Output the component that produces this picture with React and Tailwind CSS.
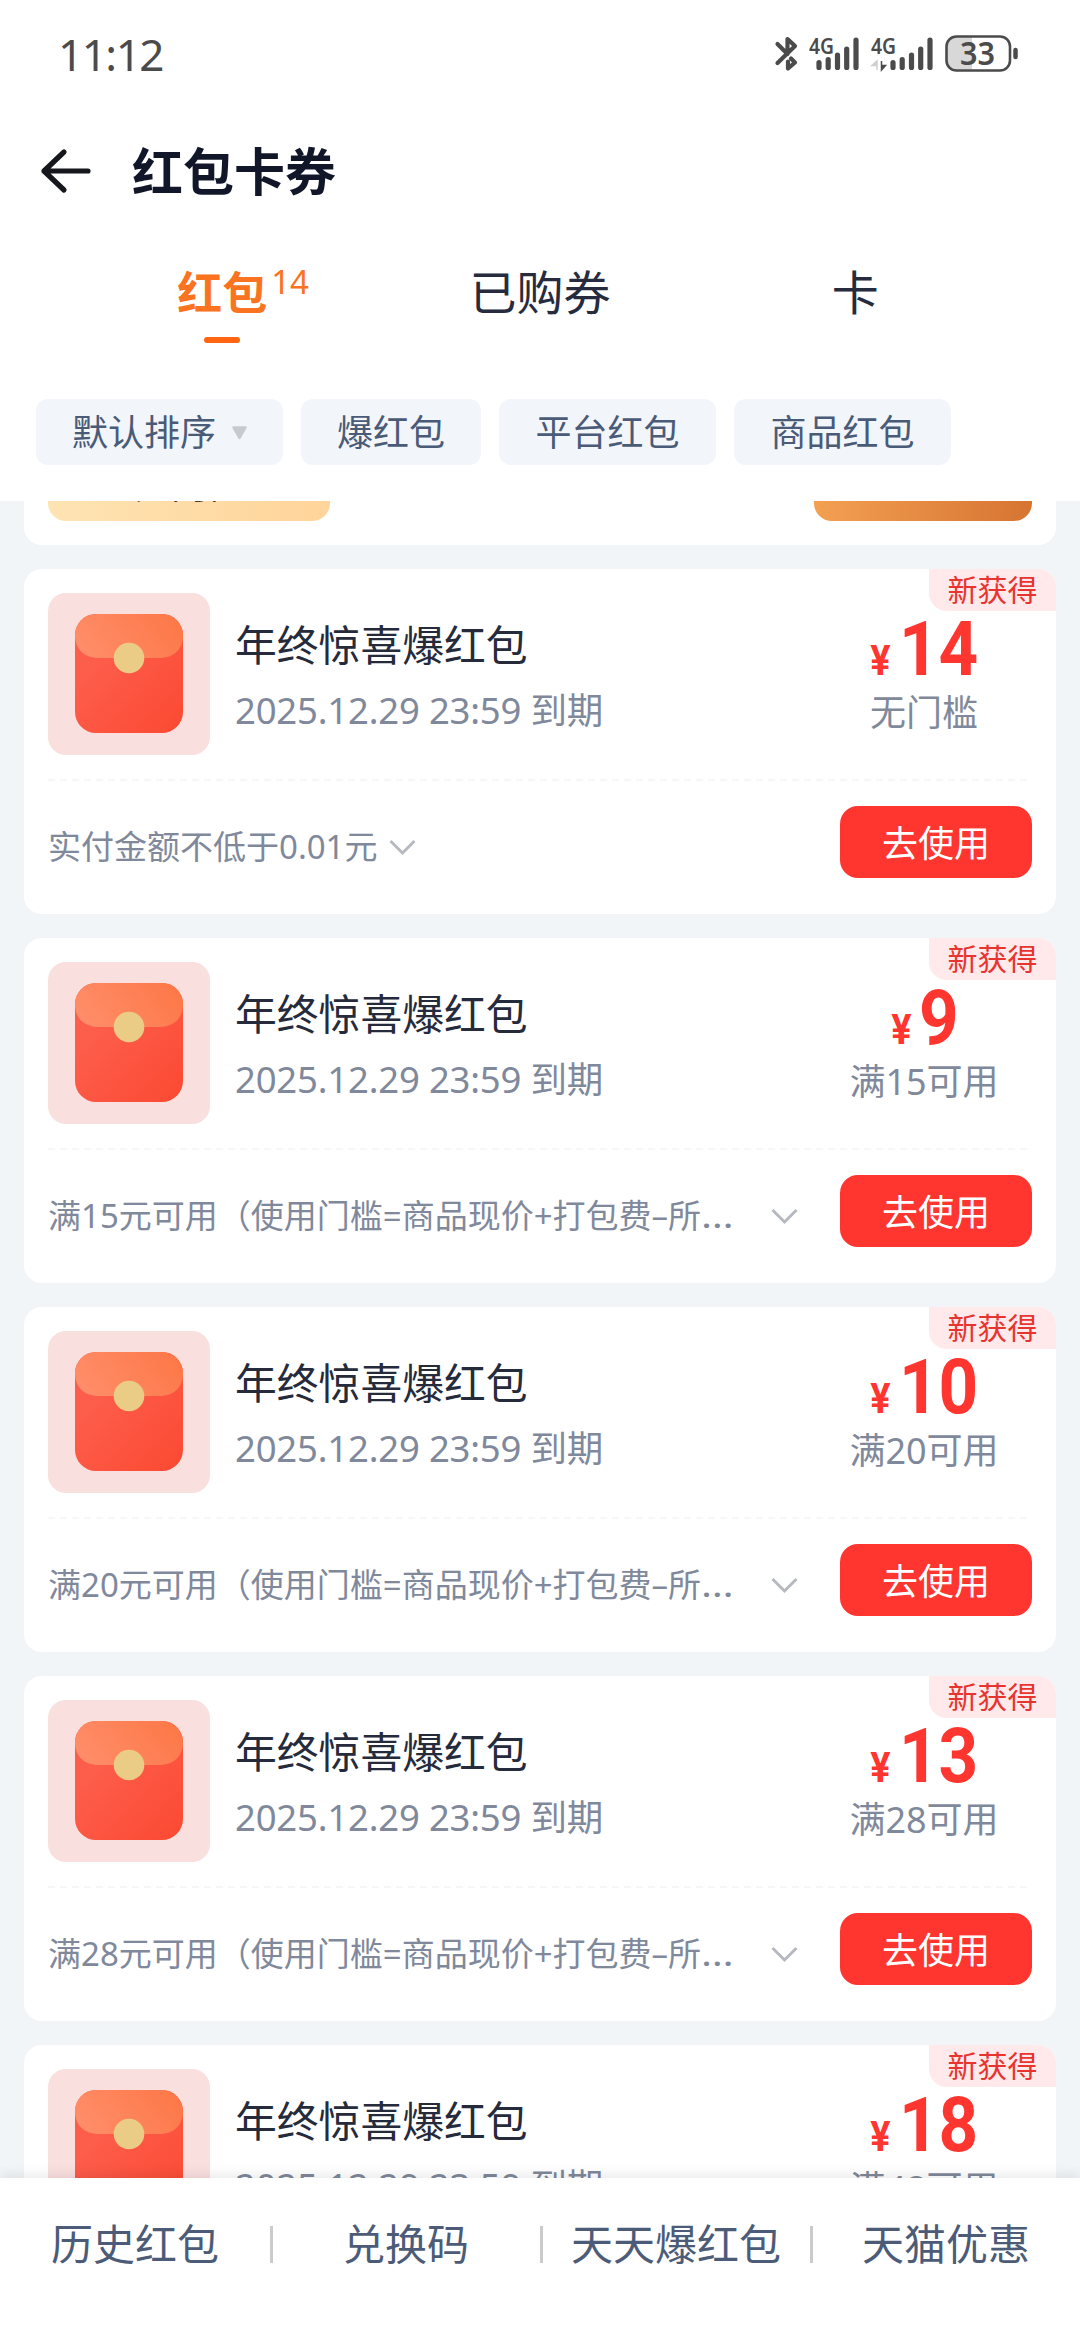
import React from "react";

const coupons = [
  { amount: "14", limit: "无门槛", rule: "实付金额不低于0.01元", short: true },
  { amount: "9", limit: "满15可用", rule: "满15元可用（使用门槛=商品现价+打包费–所" },
  { amount: "10", limit: "满20可用", rule: "满20元可用（使用门槛=商品现价+打包费–所" },
  { amount: "13", limit: "满28可用", rule: "满28元可用（使用门槛=商品现价+打包费–所" },
  { amount: "18", limit: "满48可用", rule: "满48元可用（使用门槛=商品现价+打包费–所" },
];

function SignalBars() {
  return (
    <g stroke="#4b4b4b" strokeWidth="5.200" strokeLinecap="round">
      <path d="M2.500 25.500v5M11.700 22.500v8M21 18v12.500M30.200 12v18.500M39.500 3v27.500" />
    </g>
  );
}

function StatusBar() {
  return (
    <div className="flex h-[108px] shrink-0 items-center justify-between pl-[58px] pr-[56px]">
      <span className="text-[44px] leading-[60px] tracking-[-1.5px] text-[#4b4b4b]">11:12</span>
      <svg width="250" height="64" viewBox="774 22 250 64" fill="none">
        <g stroke="#4b4b4b" strokeWidth="4.200" strokeLinejoin="round" strokeLinecap="round">
          <path d="M777.500 44l10 10V39l7.500 7-17.500 17" />
          <path d="M791 58.500l4 4-7 6v-7" />
        </g>
        <text x="809" y="53.500" fontSize="22" fontWeight="600" textLength="25" lengthAdjust="spacingAndGlyphs" fill="#4b4b4b">4G</text>
        <g transform="translate(816.500 37)"><SignalBars /></g>
        <text x="871" y="53.500" fontSize="22" fontWeight="600" textLength="25" lengthAdjust="spacingAndGlyphs" fill="#4b4b4b">4G</text>
        <path d="M877 70V61l-5 4.500h5" fill="#cfcfcf" stroke="#cfcfcf" strokeWidth="1.500" />
        <path d="M881.500 61v9l4-4.500h-4" fill="#4b4b4b" stroke="#4b4b4b" strokeWidth="1.500" />
        <g transform="translate(890.500 37)"><SignalBars /></g>
        <path d="M972 36v35H957a11 11 0 0 1-11-11V47a11 11 0 0 1 11-11z" fill="#d8d8d8" />
        <rect x="946.500" y="36.500" width="63.500" height="34" rx="10" stroke="#4b4b4b" strokeWidth="2.600" />
        <path d="M1015.500 50v7" stroke="#4b4b4b" strokeWidth="4.500" strokeLinecap="round" />
        <text x="977.500" y="65" textAnchor="middle" fontSize="32" fontWeight="600" textLength="35" lengthAdjust="spacingAndGlyphs" fill="#4b4b4b">33</text>
      </svg>
    </div>
  );
}

function Header() {
  return (
    <header className="flex h-[501px] shrink-0 flex-col bg-white">
      <StatusBar />
      <div className="flex h-[126px] items-center pl-[40px]">
        <svg width="52" height="46" viewBox="0 0 52 46" fill="none" stroke="#15171c" strokeWidth="5.200" strokeLinecap="round" strokeLinejoin="round">
          <path d="M24 4L4 23l20 19M4 23h44" />
        </svg>
        <h1 className="ml-[40px] text-[51px] font-bold leading-[52px] text-[#111729]">红包卡券</h1>
      </div>
      <nav className="mx-[67px] flex h-[118px]">
        <div className="relative flex flex-1 flex-col items-center pt-[36px]">
          <div className="relative mr-[5px] text-[45px] font-bold leading-[46px] text-[#fa7320]">
            红包
            <span className="absolute left-[94px] top-[-4px] text-[33px] font-normal leading-[32px]">14</span>
          </div>
          <div className="mr-[5px] mt-[21px] h-[6px] w-[36px] rounded-full bg-[#ff6510]" />
        </div>
        <div className="flex-1 pt-[34px] text-center text-[47px] leading-[48px] text-[#262b3d]">已购券</div>
        <div className="flex-1 pt-[34px] text-center text-[47px] leading-[48px] text-[#262b3d]">卡</div>
      </nav>
      <div className="mt-[47px] flex gap-[18px] pl-[36px] text-[36px] leading-[36px] text-[#4a5b78]">
        <div className="flex h-[66px] w-[247px] items-center rounded-[12px] bg-[#f2f5f9] pl-[36px] pt-[2px]">
          默认排序
          <svg className="ml-[15px]" width="17" height="14" viewBox="0 0 17 14">
            <path d="M2.500 1.500h12L8.500 12z" fill="#c9cacd" stroke="#c9cacd" strokeWidth="2.500" strokeLinejoin="round" />
          </svg>
        </div>
        <div className="flex h-[66px] w-[180px] items-center justify-center rounded-[12px] bg-[#f2f5f9] pt-[2px]">爆红包</div>
        <div className="flex h-[66px] w-[217px] items-center justify-center rounded-[12px] bg-[#f2f5f9] pt-[2px]">平台红包</div>
        <div className="flex h-[66px] w-[217px] items-center justify-center rounded-[12px] bg-[#f2f5f9] pt-[2px]">商品红包</div>
      </div>
    </header>
  );
}

function Envelope() {
  return (
    <svg className="shrink-0" width="162" height="162" viewBox="0 0 162 162">
      <defs>
        <linearGradient id="envelopeBody" x1="0" y1="0" x2="1" y2="1">
          <stop offset="0.300" stopColor="#fd5d4b" />
          <stop offset="1" stopColor="#fb4932" />
        </linearGradient>
        <linearGradient id="envelopeFlap" x1="0" y1="0.600" x2="1" y2="0.300">
          <stop offset="0" stopColor="#ff8d69" />
          <stop offset="1" stopColor="#fd7848" />
        </linearGradient>
      </defs>
      <rect width="162" height="162" rx="18" fill="#fadfdf" />
      <rect x="27" y="21" width="108" height="119" rx="21" fill="url(#envelopeBody)" />
      <path d="M27 42a21 21 0 0 1 21-21h66a21 21 0 0 1 21 21c0 14-9 23-24 23H51C36 65 27 56 27 42z" fill="url(#envelopeFlap)" />
      <circle cx="81" cy="65" r="15.300" fill="#ebcc86" />
    </svg>
  );
}

function Coupon({ item }) {
  return (
    <article className="relative h-[345px] shrink-0 overflow-hidden rounded-[18px] bg-white px-[24px] pt-[24px]">
      <div className="absolute right-0 top-0 flex h-[42px] w-[127px] items-center justify-center rounded-bl-[18px] bg-[#ffe9ea] text-[30px] leading-[30px] text-[#e8342f]">新获得</div>
      <div className="flex h-[162px]">
        <Envelope />
        <div className="ml-[25px] flex-1">
          <div className="mt-[30px] text-[41.800px] leading-[44px] text-[#262b3b]">年终惊喜爆红包</div>
          <div className="mt-[24px] whitespace-pre text-[36.500px] leading-[38px] tracking-[-0.2px] text-[#7f899b]">2025.12.29 23:59 到期</div>
        </div>
        <div className="flex w-[217px] flex-col items-center">
          <div className="ml-[4px] mt-[29px] flex h-[54px] items-end justify-center font-['Roboto'] font-bold text-[#ff352f]">
            <span className="mr-[4px] origin-bottom scale-x-[0.9] text-[42px] leading-[30px]">¥</span>
            <span className="origin-bottom scale-x-[0.91] text-[76px] leading-[54px]">{item.amount}</span>
          </div>
          <div className="ml-px mt-[18px] text-[36px] leading-[38px] text-[#7f899b]">{item.limit}</div>
        </div>
      </div>
      <div className="mt-[24px] h-[2px] bg-[repeating-linear-gradient(90deg,#f6f7f8_0_7px,#ffffff_7px_12px)]" />
      <div className="mt-[25px] flex h-[72px] items-center">
        <span className="mt-[9px] whitespace-nowrap text-[33px] leading-[34px] text-[#7f899b]">
          {item.rule}
          {!item.short && <span className="inline-block origin-left scale-x-[1.25]">…</span>}
        </span>
        <svg className={item.short ? "ml-[12px] mt-[10px]" : "ml-auto mr-[42px] mt-[10px]"} width="27" height="17" viewBox="0 0 27 17" fill="none" stroke="#b6b9bf" strokeWidth="3">
          <path d="M1.500 2l12 12 12-12" />
        </svg>
        <button className={item.short ? "ml-auto h-[72px] w-[192px] rounded-[18px] bg-[#ff352f] pt-[3px] text-[36px] leading-[36px] text-white" : "h-[72px] w-[192px] rounded-[18px] bg-[#ff352f] pt-[3px] text-[36px] leading-[36px] text-white"}>去使用</button>
      </div>
    </article>
  );
}

export default function App() {
  return (
    <div className="flex h-[2340px] w-[1080px] flex-col overflow-hidden bg-[#f2f5f8] font-['Noto_Sans','Noto_Sans_CJK_SC',sans-serif]">
      <Header />
      <main className="flex h-[1677px] shrink-0 flex-col gap-[24px] overflow-hidden px-[24px]">
        <section className="flex h-[44px] shrink-0 items-start justify-between rounded-b-[18px] bg-white px-[24px]">
          <div className="flex h-[20px] w-[282px] items-start justify-center overflow-hidden rounded-b-[18px] bg-linear-to-r from-[#fee4b3] to-[#ffd49a]">
            <span className="-mt-[33px] text-[36px] leading-[36px] text-[#4a3a2a]">无门槛</span>
          </div>
          <div className="h-[20px] w-[218px] rounded-b-[18px] bg-linear-to-r from-[#f3a052] to-[#d67432]" />
        </section>
        {coupons.map((item) => <Coupon key={item.amount} item={item} />)}
      </main>
      <footer className="relative grid h-[162px] shrink-0 grid-cols-4 bg-white pt-[44px] text-center text-[42px] leading-[44px] text-[#4c5c78] shadow-[0_-3px_12px_rgba(0,0,0,0.09)]">
        <div className="h-[44px]">历史红包</div>
        {["兑换码", "天天爆红包", "天猫优惠"].map((label) => (
          <div key={label} className="flex h-[44px] items-center">
            <span className="h-[37px] w-[3px] bg-[#cbcbcc]" />
            <span className="-ml-[1px] flex-1 whitespace-nowrap">{label}</span>
          </div>
        ))}
      </footer>
    </div>
  );
}
